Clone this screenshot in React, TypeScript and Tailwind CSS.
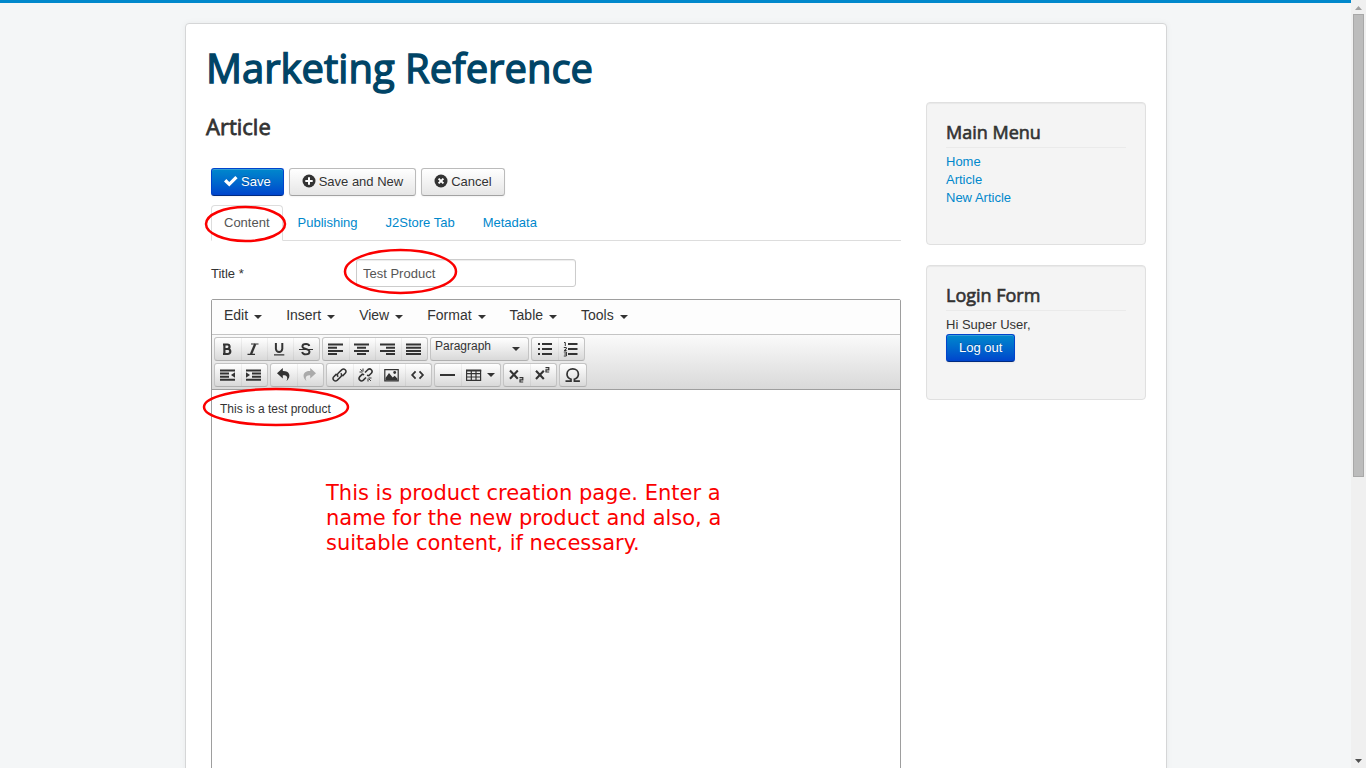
import type { ReactNode } from "react";

const heading =
  "font-['Open_Sans',sans-serif] font-normal [-webkit-text-stroke:0.035em_currentColor]";

const primaryButton =
  "inline-flex items-center rounded-[3px] border border-[#0044cc] border-b-[#002a80] bg-gradient-to-b from-[#0088cc] to-[#0044cc] px-3 py-1 text-[13px] leading-[18px] text-white shadow-[inset_0_1px_0_rgba(255,255,255,0.2),0_1px_2px_rgba(0,0,0,0.05)] [text-shadow:0_-1px_0_rgba(0,0,0,0.25)]";

const plainButton =
  "inline-flex items-center gap-[3px] rounded-[3px] border border-[#bbb] border-b-[#a2a2a2] bg-gradient-to-b from-white to-[#e6e6e6] px-3 py-1 text-[13px] leading-[18px] text-[#333] shadow-[inset_0_1px_0_rgba(255,255,255,0.2),0_1px_2px_rgba(0,0,0,0.05)] [text-shadow:0_1px_1px_rgba(255,255,255,0.75)]";

function Caret() {
  return (
    <svg width="8" height="4" viewBox="0 0 8 4" aria-hidden="true">
      <path d="M0 0h8L4 4z" fill="#333" />
    </svg>
  );
}

function Icon({ children, muted = false }: { children: ReactNode; muted?: boolean }) {
  return (
    <svg
      width="16"
      height="16"
      viewBox="0 0 16 16"
      fill="none"
      stroke={muted ? "#aaa" : "#333"}
      strokeWidth="2"
      aria-hidden="true"
    >
      {children}
    </svg>
  );
}

function Group({ children }: { children: ReactNode }) {
  return (
    <div className="flex h-6 overflow-hidden rounded-[3px] border border-[#c4c4c4] border-b-[#b0b0b0] bg-gradient-to-b from-white to-[#d9d9d9]">
      {children}
    </div>
  );
}

function Tool({ label, children, menu = false }: { label: string; children: ReactNode; menu?: boolean }) {
  return (
    <button
      type="button"
      aria-label={label}
      className="flex items-center justify-center gap-[5px] border-l border-black/5 px-[5px] pl-1 first:border-l-0 first:pl-[5px]"
    >
      {children}
      {menu && <Caret />}
    </button>
  );
}

function Ring({ className }: { className: string }) {
  return (
    <svg
      className={`pointer-events-none absolute z-10 overflow-visible ${className}`}
      viewBox="0 0 100 100"
      preserveAspectRatio="none"
      aria-hidden="true"
    >
      <ellipse
        cx="50"
        cy="50"
        rx="50"
        ry="50"
        fill="none"
        stroke="#fb0000"
        strokeWidth="2.5"
        vectorEffect="non-scaling-stroke"
      />
    </svg>
  );
}

const menus = ["Edit", "Insert", "View", "Format", "Table", "Tools"];
const otherTabs = ["Publishing", "J2Store Tab", "Metadata"];
const links = ["Home", "Article", "New Article"];

function Toolbar() {
  return (
    <div className="flex flex-col gap-[2px] border-b border-[#9e9e9e] bg-gradient-to-b from-[#fafafa] to-[#d9d9d9] p-[2px]">
      <div className="flex flex-wrap gap-[2px]">
        <Group>
          <Tool label="Bold">
            <Icon><path d="M4.400 3v10.500M3 3.500h4.300a2.200 2.200 0 0 1 0 4.500H5M3 13h4.800a2.500 2.500 0 0 0 0-5H5" strokeWidth="2.200" /></Icon>
          </Tool>
          <Tool label="Italic">
            <Icon><path d="M5 3h7.500M1.500 13.400h7.500" strokeWidth="1.200" /><path d="M9.200 3 5 13.300" strokeWidth="2.300" /></Icon>
          </Tool>
          <Tool label="Underline">
            <Icon><path d="M3.900 2v5.700a3.200 3.200 0 0 0 6.400 0V2" strokeWidth="2" /><path d="M2 13.800h10.300" strokeWidth="1.200" /></Icon>
          </Tool>
          <Tool label="Strikethrough">
            <Icon><path d="M11.300 5C11 3.500 9.700 3 8 3c-2.100 0-3.600.9-3.600 2.400C4.400 8.200 11.500 7.700 11.500 10.800c0 1.700-1.500 2.600-3.600 2.600-2 0-3.400-.8-3.800-2.400" strokeWidth="1.900" /><path d="M1 8.500h14" strokeWidth="1.200" /></Icon>
          </Tool>
        </Group>
        <Group>
          <Tool label="Align left"><Icon><path d="M0 3.500h15M0 6.700h9M0 9.900h15M0 13.100h9" /></Icon></Tool>
          <Tool label="Align center"><Icon><path d="M0 3.500h15M3 6.700h9M0 9.900h15M3 13.100h9" /></Icon></Tool>
          <Tool label="Align right"><Icon><path d="M0 3.500h15M6 6.700h9M0 9.900h15M6 13.100h9" /></Icon></Tool>
          <Tool label="Justify"><Icon><path d="M0 3.500h15M0 6.700h15M0 9.900h15M0 13.100h15" /></Icon></Tool>
        </Group>
        <Group>
          <button type="button" className="flex w-[97px] items-center justify-between pr-2 pl-1 text-[12px] leading-4 text-[#333]">
            <span className="pb-[6px]">Paragraph</span>
            <Caret />
          </button>
        </Group>
        <Group>
          <Tool label="Bullet list">
            <Icon><path d="M5 3h10M5 8h10M5 13h10" strokeWidth="1.800" /><path d="M1 3h2M1 8h2M1 13h2" /></Icon>
          </Tool>
          <Tool label="Numbered list">
            <Icon>
              <path d="M5 3h9.500M5 8h9.500M5 13h9.500" strokeWidth="1.800" />
              <path d="M1 1.500h1.300V5M.8 6.500h2.500V8L1.100 9.500h2.500M.8 11h2.600v4H.8M1.300 13h2" strokeWidth="1" />
            </Icon>
          </Tool>
        </Group>
      </div>
      <div className="flex flex-wrap gap-[2px]">
        <Group>
          <Tool label="Decrease indent">
            <Icon><path d="M0 3.500h15M0 6.600h9M0 9.700h9M0 12.800h15" strokeWidth="2" /><path d="M15 5.300v5.400L11 8z" fill="#333" stroke="none" /></Icon>
          </Tool>
          <Tool label="Increase indent">
            <Icon><path d="M0 3.500h15M6 6.600h9M6 9.700h9M0 12.800h15" strokeWidth="2" /><path d="M0 5.300v5.400L4 8z" fill="#333" stroke="none" /></Icon>
          </Tool>
        </Group>
        <Group>
          <Tool label="Undo">
            <Icon><path d="M6.800 1 1 6.300l5.800 5.300V8.300c4-.2 5.500 1.700 3.700 6C16 9 13.300 3.900 6.800 4.100z" fill="#333" stroke="none" /></Icon>
          </Tool>
          <Tool label="Redo">
            <Icon muted><path d="m8.200 1 5.800 5.300-5.800 5.300V8.300c-4-.2-5.500 1.700-3.700 6C-1 9 1.700 3.900 8.200 4.100z" fill="#aaa" stroke="none" /></Icon>
          </Tool>
        </Group>
        <Group>
          <Tool label="Insert link">
            <Icon><path d="M6.200 9.800a2.500 2.500 0 0 1 0-3.500l3.700-3.700a2.500 2.500 0 0 1 3.500 3.500l-3 3M8.800 6.200a2.500 2.500 0 0 1 0 3.500l-3.700 3.700a2.500 2.500 0 0 1-3.500-3.500l3-3" strokeWidth="1.500" /></Icon>
          </Tool>
          <Tool label="Remove link">
            <Icon><path d="M7 5.500l3-3a2.500 2.500 0 0 1 3.500 3.500l-2.700 2.700L9 8.200M8 10.500l-2.900 2.900a2.500 2.500 0 0 1-3.500-3.500l2.700-2.700L6.200 7.700" strokeWidth="1.600" /><path d="M5 1.500v3M1.500 5h3M2.300 2.200l2 2M10 11.500v3M10.500 11h3M10.900 11.900l2 2" strokeWidth="1" /></Icon>
          </Tool>
          <Tool label="Insert image">
            <Icon><path d="M.8 2.600h13.400v11.200H.8z" strokeWidth="1.200" /><path d="M1.500 13.300v-2.300l3.500-5 3.700 4.500 2-1.800 2.800 3v1.600z" fill="#333" stroke="none" /><circle cx="10.700" cy="5.500" r="1.400" fill="#333" stroke="none" /></Icon>
          </Tool>
          <Tool label="Source code">
            <Icon><path d="M5.600 4.300 2.200 8l3.400 3.700M9.500 4.300 12.900 8l-3.400 3.700" strokeWidth="1.800" /></Icon>
          </Tool>
        </Group>
        <Group>
          <Tool label="Horizontal line"><Icon><path d="M0 8h15" /></Icon></Tool>
          <Tool label="Table" menu>
            <Icon><path d="M.6 3.500h14v9.900H.6zM.6 6.700h14M.6 10h14M5.300 3v10M10 3v10" strokeWidth="1.200" /><path d="M0 3.500h15.200" strokeWidth="1.800" /></Icon>
          </Tool>
        </Group>
        <Group>
          <Tool label="Subscript">
            <Icon><path d="m1 3.500 7.800 8.200M8.800 3.500 1 11.700" strokeWidth="2.100" /><path d="M10.500 10.600h3.300v2.200H11V15h3.200" strokeWidth="1.200" /></Icon>
          </Tool>
          <Tool label="Superscript">
            <Icon><path d="m1 3.800 7.800 8.200M8.800 3.800 1 12" strokeWidth="2.100" /><path d="M10.500 .6h3.300v2.200H11V5h3.200" strokeWidth="1.200" /></Icon>
          </Tool>
        </Group>
        <Group>
          <Tool label="Special character">
            <Icon><path d="M.5 14.200H6v-2C3.500 11.200 2 9.500 2 7.200 2 4.200 4.400 1.900 7.700 1.900s5.700 2.300 5.700 5.300c0 2.300-1.500 4-4 5v2h5.500" strokeWidth="1.700" /></Icon>
          </Tool>
        </Group>
      </div>
    </div>
  );
}

function Module({ title, children }: { title: string; children: ReactNode }) {
  return (
    <section className="rounded-[4px] border border-[#e0e0e0] bg-[#f4f4f4] px-[19px] pt-4 pb-[37px] shadow-[inset_0_1px_1px_rgba(0,0,0,0.05)]">
      <h3 className={`${heading} mb-[5px] border-b border-[#eaeaea] pb-[2px] text-[18px] leading-[26px]`}>
        {title}
      </h3>
      {children}
    </section>
  );
}

export default function App() {
  return (
    <div className="flex h-screen overflow-hidden bg-[#f4f6f7] font-['Liberation_Sans',Arial,sans-serif] text-[13px] leading-[18px] text-[#333]">
      <div className="min-w-0 flex-1 overflow-hidden border-t-[3px] border-[#0088cc] pt-5 pr-5 pl-[21px]">
        <div className="mx-auto max-w-[982px] rounded-[4px] border border-[#d5d6d7] bg-white p-5 shadow-[0_0_6px_rgba(0,0,0,0.05)]">
          <header>
            <h1 className={`${heading} text-[40px] leading-[48px] text-[#004466]`}>
              Marketing Reference
            </h1>
          </header>
          <div className="mt-[10px] flex items-start gap-5">
            <main className="min-w-0 flex-1">
              <h2 className={`${heading} pt-[9px] text-[22px] leading-[30px]`}>
                Article
              </h2>
              <form className="px-[5px] pt-[27px]" onSubmit={(e) => e.preventDefault()}>
                <div className="flex gap-[5px]">
                  <button type="submit" className={`${primaryButton} gap-[3px]`}>
                    <svg width="14" height="14" viewBox="0 0 14 14" className="mb-[2px]" aria-hidden="true">
                      <path d="M0 7.400 2.300 5.100l3 3L11.300 2 13.600 4.200l-8.300 8.400z" fill="#fff" />
                    </svg>
                    Save
                  </button>
                  <button type="button" className={plainButton}>
                    <svg width="14" height="14" viewBox="0 0 14 14" className="mb-[2px]" aria-hidden="true">
                      <circle cx="7" cy="7" r="6.500" fill="#333" />
                      <path d="M7 3.300v7.400M3.300 7h7.400" stroke="#fff" strokeWidth="2" />
                    </svg>
                    Save and New
                  </button>
                  <button type="button" className={plainButton}>
                    <svg width="14" height="14" viewBox="0 0 14 14" className="mb-[2px]" aria-hidden="true">
                      <circle cx="7" cy="7" r="6.500" fill="#333" />
                      <path d="m4.600 4.600 4.800 4.800M9.400 4.600 4.600 9.400" stroke="#fff" strokeWidth="2" />
                    </svg>
                    Cancel
                  </button>
                </div>
                <nav className="mt-[9px] flex gap-[2px] border-b border-[#ddd]">
                  <a href="#content" className="relative -mb-px rounded-t-[4px] border border-[#ddd] border-b-white bg-white px-3 py-2 leading-[18px] text-[#555]">
                    Content
                    <Ring className="top-px -left-[6px] h-[34px] w-[79px]" />
                  </a>
                  {otherTabs.map((tab) => (
                    <a key={tab} href={`#${tab}`} className="px-[13px] pt-[9px] pb-2 leading-[18px] text-[#0088cc]">
                      {tab}
                    </a>
                  ))}
                </nav>
                <div className="mt-[18px] flex items-center">
                  <label htmlFor="title" className="w-[145px] pt-[2px]">Title *</label>
                  <div className="relative">
                    <input
                      id="title"
                      type="text"
                      defaultValue="Test Product"
                      className="block h-7 w-[220px] rounded-[3px] border border-[#ccc] bg-white px-[6px] text-[13px] text-[#555] shadow-[inset_0_1px_1px_rgba(0,0,0,0.075)]"
                    />
                    <Ring className="-top-[9px] -left-[11px] h-[43px] w-[111px]" />
                  </div>
                </div>
                <div className="mt-3 rounded-t-[2px] border border-[#9e9e9e] bg-white">
                  <div className="flex border-b border-[#c4c4c4] bg-[#fdfdfd] pb-1 text-[14px] leading-[18px]">
                    {menus.map((menu) => (
                      <button key={menu} type="button" className="flex items-center gap-[6px] px-3 py-[6px]">
                        {menu}
                        <span className="pt-1"><Caret /></span>
                      </button>
                    ))}
                  </div>
                  <Toolbar />
                  <div className="relative min-h-[520px] px-2 py-[10px] text-[12px] leading-[18px]">
                    <p>This is a test product</p>
                    <Ring className="-top-px -left-2 h-9 w-36" />
                    <p className="absolute top-[91px] left-[114px] w-[420px] font-['DejaVu_Sans',sans-serif] text-[21px] leading-[25px] text-[#fb0000]">
                      This is product creation page. Enter a name for the new product and also, a suitable content, if necessary.
                    </p>
                  </div>
                </div>
              </form>
            </main>
            <aside className="flex w-[220px] shrink-0 flex-col gap-5">
              <Module title="Main Menu">
                <ul>
                  {links.map((link) => (
                    <li key={link}>
                      <a href={`#${link}`} className="text-[#0088cc]">{link}</a>
                    </li>
                  ))}
                </ul>
              </Module>
              <Module title="Login Form">
                <p>Hi Super User,</p>
                <button type="button" className={primaryButton}>Log out</button>
              </Module>
            </aside>
          </div>
        </div>
      </div>
      <div className="flex w-[15px] shrink-0 flex-col items-center bg-[#f0f0f0]" aria-hidden="true">
        <svg width="15" height="14" viewBox="0 0 15 14"><path d="M4 10h7L7.500 6z" fill="#a0a0a0" /></svg>
        <div className="flex w-full flex-1 flex-col px-[2px]">
          <div className="h-[62.5%] border border-[#a8a8a8] bg-[#bcbcbc]" />
        </div>
        <svg width="15" height="14" viewBox="0 0 15 14"><path d="M4 5h7L7.500 9z" fill="#505050" /></svg>
      </div>
    </div>
  );
}
